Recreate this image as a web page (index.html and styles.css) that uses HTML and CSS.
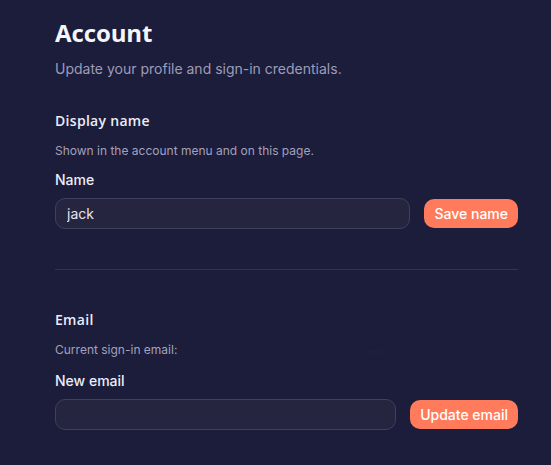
FILE: index.html
```html
<!DOCTYPE html>
<html>
<head>
<meta charset="utf-8">
<link rel="stylesheet" href="styles.css">
</head>
<body>
<main class="page">
  <h1 class="title">Account</h1>
  <p class="subtitle">Update your profile and sign-in credentials.</p>

  <section class="section">
    <h2 class="section-title">Display name</h2>
    <p class="hint">Shown in the account menu and on this page.</p>
    <label class="label">Name</label>
    <div class="row">
      <input class="input" type="text" value="jack">
      <button class="btn">Save name</button>
    </div>
  </section>

  <hr class="divider">

  <section class="section">
    <h2 class="section-title">Email</h2>
    <p class="hint">Current sign-in email: <span class="current">jack@example.com</span></p>
    <label class="label">New email</label>
    <div class="row">
      <input class="input" type="email" value="">
      <button class="btn">Update email</button>
    </div>
  </section>
</main>
</body>
</html>
```

FILE: styles.css
```css
html, body {
  margin: 0;
  padding: 0;
  background: #1c1c3b;
  height: 100%;
}
body {
  font-family: Inter, "Noto Sans", sans-serif;
  color: #e8e8f2;
}
.page {
  padding: 18px 33px 0 55px;
  width: 463px;
}
.title {
  margin: 0;
  font-family: "Open Sans", Inter, sans-serif;
  font-weight: 700;
  font-size: 24px;
  line-height: 30px;
  color: #f4f4fa;
  letter-spacing: -0.1px;
}
.subtitle {
  margin: 12px 0 0;
  font-size: 14px;
  line-height: 18px;
  color: #9c9cb8;
}
.section {
  margin-top: 34px;
}
.section-title {
  margin: 0;
  font-family: "Open Sans", Inter, sans-serif;
  font-weight: 600;
  font-size: 14px;
  line-height: 18px;
  color: #ececf6;
  letter-spacing: 0.3px;
}
.hint {
  margin: 13px 0 0;
  font-size: 12px;
  line-height: 15px;
  color: #a2a2bc;
}
.current {
  margin-left: 175px;
  color: #21213f;
  font-size: 6px;
}
.label {
  display: block;
  margin-top: 13px;
  font-size: 14px;
  font-weight: 500;
  line-height: 18px;
  color: #ececf6;
}
.row {
  display: flex;
  align-items: center;
  gap: 14px;
  margin-top: 9px;
}
.input {
  flex: 1;
  min-width: 0;
  height: 31px;
  box-sizing: border-box;
  background: #25253f;
  border: 1px solid #3f3f5e;
  border-radius: 10px;
  padding: 0 11px;
  font-family: Inter, sans-serif;
  font-size: 14px;
  color: #e4e4ef;
  outline: none;
}
.btn {
  height: 29px;
  padding: 0 10px;
  border: none;
  border-radius: 10px;
  background: #ff7b5c;
  color: #fff;
  font-family: Inter, sans-serif;
  font-size: 14px;
  font-weight: 500;
  white-space: nowrap;
}
.divider {
  margin: 40px 0 0;
  border: none;
  border-top: 1px solid #33334f;
}
.divider + .section {
  margin-top: 41px;
}
```
